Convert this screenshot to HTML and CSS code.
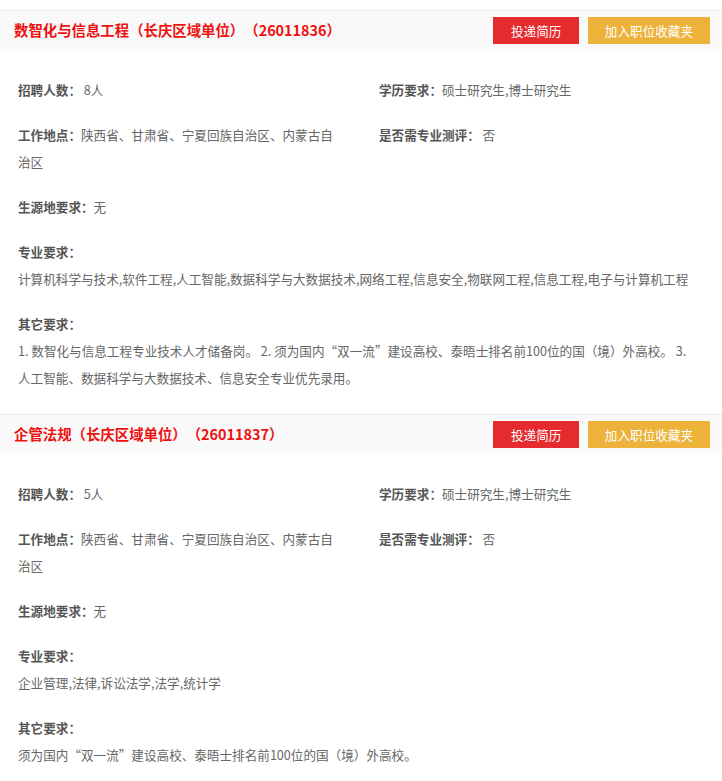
FILE: index.html
```html
<!DOCTYPE html>
<html lang="zh-CN">
<head>
<meta charset="utf-8">
<title>职位列表</title>
<link rel="stylesheet" href="styles.css">
</head>
<body>
<div class="list">
  <div class="card">
    <div class="card-head">
      <h2 class="title">数智化与信息工程（长庆区域单位）（26011836）</h2>
      <div class="actions">
        <a class="btn btn-red">投递简历</a>
        <a class="btn btn-yellow">加入职位收藏夹</a>
      </div>
    </div>
    <div class="card-body">
      <div class="item"><span class="label">招聘人数：</span><span class="value"> 8人</span></div>
      <div class="item"><span class="label">学历要求：</span><span class="value">硕士研究生,博士研究生</span></div>
      <div class="item"><span class="label">工作地点：</span><span class="value">陕西省、甘肃省、宁夏回族自治区、内蒙古自治区</span></div>
      <div class="item"><span class="label">是否需专业测评：</span><span class="value"> 否</span></div>
      <div class="item full"><span class="label">生源地要求：</span><span class="value">无</span></div>
      <div class="item full"><div class="label">专业要求：</div><div class="value">计算机科学与技术,软件工程,人工智能,数据科学与大数据技术,网络工程,信息安全,物联网工程,信息工程,电子与计算机工程</div></div>
      <div class="item full"><div class="label">其它要求：</div><div class="value">1. 数智化与信息工程专业技术人才储备岗。 2. 须为国内“双一流”建设高校、泰晤士排名前100位的国（境）外高校。 3. 人工智能、数据科学与大数据技术、信息安全专业优先录用。</div></div>
    </div>
  </div>
  <div class="card">
    <div class="card-head">
      <h2 class="title">企管法规（长庆区域单位）（26011837）</h2>
      <div class="actions">
        <a class="btn btn-red">投递简历</a>
        <a class="btn btn-yellow">加入职位收藏夹</a>
      </div>
    </div>
    <div class="card-body">
      <div class="item"><span class="label">招聘人数：</span><span class="value"> 5人</span></div>
      <div class="item"><span class="label">学历要求：</span><span class="value">硕士研究生,博士研究生</span></div>
      <div class="item"><span class="label">工作地点：</span><span class="value">陕西省、甘肃省、宁夏回族自治区、内蒙古自治区</span></div>
      <div class="item"><span class="label">是否需专业测评：</span><span class="value"> 否</span></div>
      <div class="item full"><span class="label">生源地要求：</span><span class="value">无</span></div>
      <div class="item full"><div class="label">专业要求：</div><div class="value">企业管理,法律,诉讼法学,法学,统计学</div></div>
      <div class="item full"><div class="label">其它要求：</div><div class="value">须为国内“双一流”建设高校、泰晤士排名前100位的国（境）外高校。</div></div>
    </div>
  </div>
</div>
</body>
</html>
```

FILE: styles.css
```css
* { box-sizing: border-box; }
html, body {
  margin: 0;
  padding: 0;
  background: #fff;
}
body {
  font-family: "Noto Sans CJK SC", "Noto Sans", sans-serif;
  font-size: 12.6px;
  color: #666;
  text-spacing-trim: space-all;
}
.list {
  padding-top: 10px;
}
.card {
  border-top: 1px solid #ececec;
}
.card-head {
  height: 38px;
  background: #f9f9f9;
  display: flex;
  align-items: center;
  justify-content: space-between;
  padding: 0 12px 0 14px;
}
.title {
  margin: 0;
  font-size: 14.4px;
  font-weight: bold;
  color: #ee1111;
  line-height: 20px;
}
.actions {
  display: flex;
  gap: 9px;
}
.btn {
  display: block;
  height: 27px;
  line-height: 27px;
  padding: 0 17px;
  color: #fff;
  font-size: 12.6px;
  text-decoration: none;
  white-space: nowrap;
}
.btn-red {
  background: #e52b2e;
  padding: 0 17.5px;
}
.btn-yellow {
  background: #ecb23a;
}
.card-body {
  display: grid;
  grid-template-columns: 1fr 1fr;
  row-gap: 18px;
  padding: 27px 0 23px;
}
.item {
  padding: 0 18px;
  line-height: 27px;
}
.item.full {
  grid-column: 1 / -1;
  padding-right: 26px;
}
.label {
  font-weight: bold;
  color: #555;
}
.value {
  color: #666;
}
```
